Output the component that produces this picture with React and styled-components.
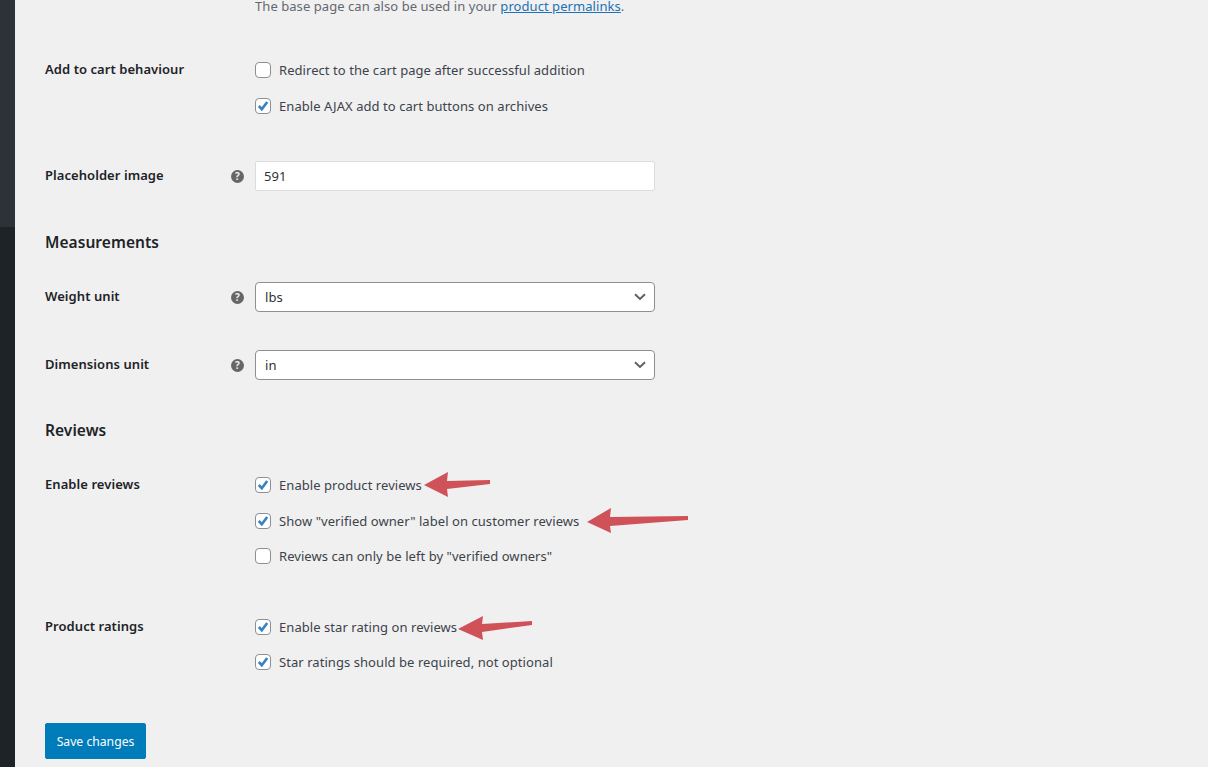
import React from "react";
import styled, { createGlobalStyle } from "styled-components";

const Global = createGlobalStyle`
  html, body { margin: 0; padding: 0; height: 767px; overflow: hidden; background: #f0f0f1; }
  body { font-family: "Noto Sans", "Open Sans", sans-serif; font-size: 13px; letter-spacing: 0.06px; color: #3c434a; }
`;

const Page = styled.div`
  position: relative;
  display: flex;
  width: 1208px;
  height: 767px;
  overflow: hidden;
`;

const Sidebar = styled.aside`
  flex: 0 0 15px;
  display: flex;
  flex-direction: column;
  background: #1d2327;
`;

const SidebarActive = styled.div`
  height: 227px;
  background: #2c3338;
`;

const Main = styled.main`
  flex: 1;
  padding-left: 30px;
  background: #f0f0f1;
`;

const Note = styled.p`
  margin: 0 0 0 210px;
  height: 15px;
  line-height: 12px;
  color: #646970;
`;

const Link = styled.a`
  color: #2271b1;
  text-decoration: underline;
`;

const Row = styled.div`
  display: grid;
  grid-template-columns: 186px 24px 400px;
  margin-top: ${(p) => p.$top}px;
`;

const Label = styled.div`
  font-weight: 600;
  color: #1d2327;
  line-height: 18px;
  margin-top: ${(p) => p.$offset || 0}px;
`;

const HelpCell = styled.div`
  display: flex;
  align-items: center;
`;

const Help = styled.span`
  display: flex;
  align-items: center;
  justify-content: center;
  width: 13px;
  height: 13px;
  margin-top: 1px;
  border-radius: 50%;
  background: #666;
  color: #f0f0f1;
  font-size: 10px;
  font-weight: 700;
  line-height: 13px;
`;

const Checks = styled.div`
  grid-column: 3;
  display: flex;
  flex-direction: column;
`;

const CheckRow = styled.label`
  display: flex;
  align-items: center;
  gap: 8px;
  height: 18px;
  margin-top: ${(p) => p.$top || 0}px;
  white-space: nowrap;
  color: #3c434a;
`;

const Box = styled.span`
  flex: 0 0 16px;
  box-sizing: border-box;
  width: 16px;
  height: 16px;
  border: 1px solid #8c8f94;
  border-radius: 4px;
  background: #fff;
  display: flex;
  align-items: center;
  justify-content: center;
`;

const TextField = styled.input`
  box-sizing: border-box;
  width: 400px;
  height: 30px;
  padding: 0 8px;
  border: 1px solid #dcdcde;
  border-radius: 2px;
  background: #fff;
  color: #2c3338;
  font: inherit;
  letter-spacing: inherit;
  outline: none;
`;

const SelectBox = styled.div`
  box-sizing: border-box;
  width: 400px;
  height: 30px;
  padding: 0 8px 0 9px;
  border: 1px solid #8c8f94;
  border-radius: 4px;
  background: #fff;
  color: #2c3338;
  display: flex;
  align-items: center;
  justify-content: space-between;
`;

const Heading = styled.h2`
  margin: ${(p) => p.$top}px 0 0;
  font-size: 15.5px;
  font-weight: 600;
  line-height: 22px;
  color: #1d2327;
`;

const Save = styled.button`
  display: block;
  box-sizing: border-box;
  width: 101px;
  height: 36px;
  margin-top: ${(p) => p.$top}px;
  padding: 0;
  border: 1px solid #007cba;
  border-radius: 2px;
  background: #007cba;
  color: #fff;
  font-family: inherit;
  font-size: 12.2px;
`;

const Overlay = styled.svg`
  position: absolute;
  left: 0;
  top: 0;
  pointer-events: none;
`;

const Check = ({ on, top, children }) => (
  <CheckRow $top={top}>
    <Box>
      {on && (
        <svg width="14" height="14" viewBox="0 0 14 14">
          <path d="M2.8 7 L5.8 10.2 L11.2 3" fill="none" stroke="#3582c4" strokeWidth="2.6" />
        </svg>
      )}
    </Box>
    <span>{children}</span>
  </CheckRow>
);

const Select = ({ value }) => (
  <SelectBox>
    <span>{value}</span>
    <svg width="12" height="8" viewBox="0 0 12 8">
      <path d="M1 1.3 L6 6 L11 1.3" fill="none" stroke="#5a5f64" strokeWidth="1.9" />
    </svg>
  </SelectBox>
);

const ARROWS = [
  "M424 485 L448 472 L447 481 L490 480 L490 484 L447 489 L448 497 Z",
  "M587 522 L611 508 L610 517 L688 516 L688 520 L610 526 L611 533 Z",
  "M458 629 L483 616 L482 624 L532 621 L532 625 L482 632 L483 640 Z",
];

export default function App() {
  return (
    <Page>
      <Global />
      <Sidebar>
        <SidebarActive />
      </Sidebar>
      <Main>
        <Note>
          The base page can also be used in your <Link>product permalinks</Link>.
        </Note>

        <Row $top={45}>
          <Label>Add to cart behaviour</Label>
          <Checks>
            <Check top={1}>Redirect to the cart page after successful addition</Check>
            <Check on top={18}>Enable AJAX add to cart buttons on archives</Check>
          </Checks>
        </Row>

        <Row $top={46}>
          <Label $offset={5}>Placeholder image</Label>
          <HelpCell><Help>?</Help></HelpCell>
          <TextField defaultValue="591" readOnly />
        </Row>

        <Heading $top={40}>Measurements</Heading>

        <Row $top={29}>
          <Label $offset={5}>Weight unit</Label>
          <HelpCell><Help>?</Help></HelpCell>
          <Select value="lbs" />
        </Row>

        <Row $top={38}>
          <Label $offset={5}>Dimensions unit</Label>
          <HelpCell><Help>?</Help></HelpCell>
          <Select value="in" />
        </Row>

        <Heading $top={39}>Reviews</Heading>

        <Row $top={34}>
          <Label>Enable reviews</Label>
          <Checks>
            <Check on top={1}>Enable product reviews</Check>
            <Check on top={18}>Show "verified owner" label on customer reviews</Check>
            <Check top={17}>Reviews can only be left by "verified owners"</Check>
          </Checks>
        </Row>

        <Row $top={52}>
          <Label>Product ratings</Label>
          <Checks>
            <Check on top={1}>Enable star rating on reviews</Check>
            <Check on top={17}>Star ratings should be required, not optional</Check>
          </Checks>
        </Row>

        <Save $top={52}>Save changes</Save>
      </Main>
      <Overlay width="1208" height="767" viewBox="0 0 1208 767">
        {ARROWS.map((d) => (
          <path key={d} d={d} fill="#cf5258" />
        ))}
      </Overlay>
    </Page>
  );
}
